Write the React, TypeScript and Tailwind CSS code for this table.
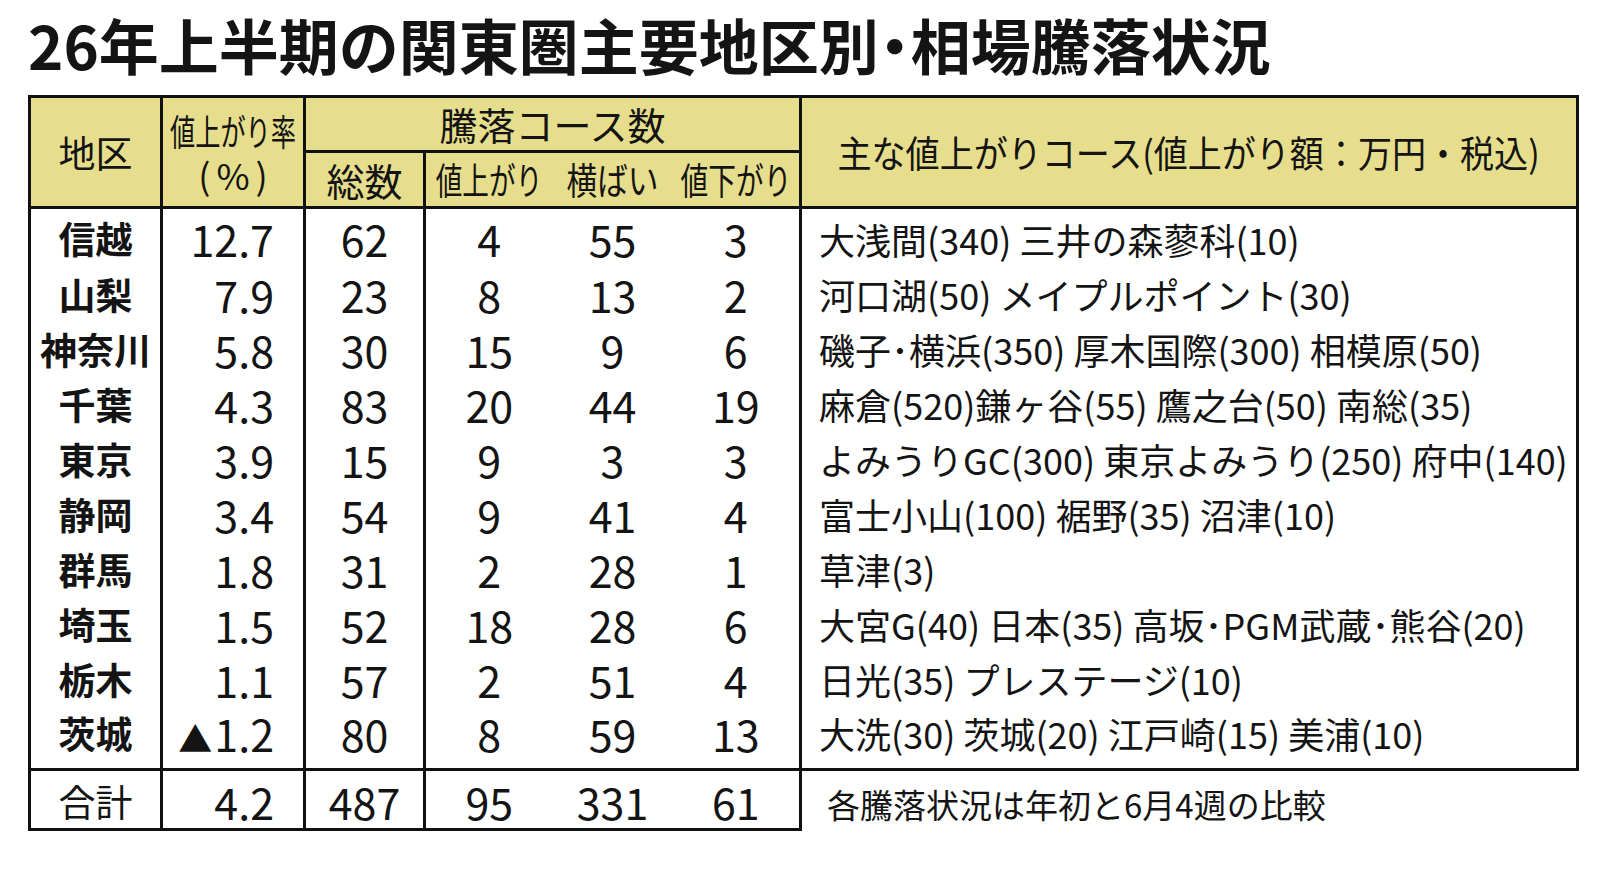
import React from "react";

const ROWS = [
  { area: "信越", rate: "12.7", total: "62", up: "4", flat: "55", down: "3", courses: "大浅間(340) 三井の森蓼科(10)" },
  { area: "山梨", rate: "7.9", total: "23", up: "8", flat: "13", down: "2", courses: "河口湖(50) メイプルポイント(30)" },
  { area: "神奈川", rate: "5.8", total: "30", up: "15", flat: "9", down: "6", courses: "磯子･横浜(350) 厚木国際(300) 相模原(50)" },
  { area: "千葉", rate: "4.3", total: "83", up: "20", flat: "44", down: "19", courses: "麻倉(520)鎌ヶ谷(55) 鷹之台(50) 南総(35)" },
  { area: "東京", rate: "3.9", total: "15", up: "9", flat: "3", down: "3", courses: "よみうりGC(300) 東京よみうり(250) 府中(140)" },
  { area: "静岡", rate: "3.4", total: "54", up: "9", flat: "41", down: "4", courses: "富士小山(100) 裾野(35) 沼津(10)" },
  { area: "群馬", rate: "1.8", total: "31", up: "2", flat: "28", down: "1", courses: "草津(3)" },
  { area: "埼玉", rate: "1.5", total: "52", up: "18", flat: "28", down: "6", courses: "大宮G(40) 日本(35) 高坂･PGM武蔵･熊谷(20)" },
  { area: "栃木", rate: "1.1", total: "57", up: "2", flat: "51", down: "4", courses: "日光(35) プレステージ(10)" },
  { area: "茨城", rate: "▲1.2", total: "80", up: "8", flat: "59", down: "13", courses: "大洗(30) 茨城(20) 江戸崎(15) 美浦(10)" },
];

const line = "border-[#111]";

function Squeeze({ children, className = "" }: { children: React.ReactNode; className?: string }) {
  return (
    <div className="flex justify-center">
      <span className={`inline-block whitespace-nowrap ${className}`}>{children}</span>
    </div>
  );
}

function Rate({ value }: { value: string }) {
  if (value.startsWith("▲")) {
    return (
      <>
        <span className="mr-[2px] text-[34px]">▲</span>
        {value.slice(1)}
      </>
    );
  }
  return <>{value}</>;
}

export default function App() {
  return (
    <div className="min-h-[879px] w-[1600px] bg-white pl-[28px] font-['Noto_Sans_CJK_JP',sans-serif] text-[#141414]">
      <h1 className="mt-[14px] h-[60px] whitespace-nowrap text-[60px] font-bold leading-none">
        26年上半期の関東圏主要地区別<span className="-mx-[14px]">・</span>相場騰落状況
      </h1>

      <table className="mt-[21px] w-[1548px] table-fixed border-collapse leading-none">
        <colgroup>
          <col className="w-[132px]" />
          <col className="w-[143px]" />
          <col className="w-[120px]" />
          <col className="w-[128px]" />
          <col className="w-[120px]" />
          <col className="w-[128px]" />
          <col className="w-[777px]" />
        </colgroup>
        <thead className="bg-[#e6de8c]">
          <tr className="h-[55px]">
            <th rowSpan={2} className={`border-[3px] ${line} text-[37px] font-normal`}>
              地区
            </th>
            <th rowSpan={2} className={`border-[3px] ${line} font-normal`}>
              <Squeeze className="scale-x-[0.7] text-[36px]">値上がり率</Squeeze>
              <Squeeze className="mt-[8px] pl-[6px] text-[36px] tracking-[6px]">(%)</Squeeze>
            </th>
            <th colSpan={4} className={`border-[3px] ${line} text-[38px] font-normal`}>
              騰落コース数
            </th>
            <th rowSpan={2} className={`border-[3px] ${line} font-normal`}>
              <Squeeze className="scale-x-[0.92] text-[37px]">主な値上がりコース(値上がり額：万円・税込)</Squeeze>
            </th>
          </tr>
          <tr className="h-[56px]">
            <th className={`border-[3px] ${line} text-[38px] font-normal`}>総数</th>
            <th className={`border-y-[3px] border-l-[3px] ${line} font-normal`}>
              <Squeeze className="scale-x-[0.72] text-[37px]">値上がり</Squeeze>
            </th>
            <th className={`border-y-[3px] ${line} font-normal`}>
              <Squeeze className="scale-x-[0.83] text-[37px]">横ばい</Squeeze>
            </th>
            <th className={`border-y-[3px] border-r-[3px] ${line} font-normal`}>
              <Squeeze className="scale-x-[0.75] text-[37px]">値下がり</Squeeze>
            </th>
          </tr>
        </thead>
        <tbody>
          {ROWS.map((row, i) => {
            const first = i === 0;
            const last = i === ROWS.length - 1;
            const edge = first ? "pt-[2px]" : last ? "pb-[8px]" : "";
            return (
              <tr key={row.area} className={first ? "h-[59px]" : last ? "h-[63px]" : "h-[55px]"}>
                <td className={`border-x-[3px] ${line} ${edge} text-center text-[37px] font-semibold`}>
                  {row.area}
                </td>
                <td className={`border-x-[3px] ${line} ${edge} pr-[29px] text-right text-[43px]`}>
                  <Rate value={row.rate} />
                </td>
                <td className={`border-x-[3px] ${line} ${edge} text-center text-[43px]`}>{row.total}</td>
                <td className={`border-l-[3px] ${line} ${edge} text-center text-[43px]`}>{row.up}</td>
                <td className={`${edge} text-center text-[43px]`}>{row.flat}</td>
                <td className={`border-r-[3px] ${line} ${edge} text-center text-[43px]`}>{row.down}</td>
                <td className={`border-x-[3px] ${line} ${edge} whitespace-nowrap pl-[17px] text-[36px]`}>
                  {row.courses}
                </td>
              </tr>
            );
          })}
          <tr className="h-[60px]">
            <td className={`border-[3px] ${line} pt-[4px] text-center text-[37px]`}>合計</td>
            <td className={`border-[3px] ${line} pt-[4px] pr-[29px] text-right text-[43px]`}>4.2</td>
            <td className={`border-[3px] ${line} pt-[4px] text-center text-[43px]`}>487</td>
            <td className={`border-y-[3px] border-l-[3px] ${line} pt-[4px] text-center text-[43px]`}>95</td>
            <td className={`border-y-[3px] ${line} pt-[4px] text-center text-[43px]`}>331</td>
            <td className={`border-y-[3px] border-r-[3px] ${line} pt-[4px] text-center text-[43px]`}>61</td>
            <td className={`border-t-[3px] ${line} whitespace-nowrap pt-[8px] pl-[25px] text-[33px]`}>
              各騰落状況は年初と6月4週の比較
            </td>
          </tr>
        </tbody>
      </table>
    </div>
  );
}
